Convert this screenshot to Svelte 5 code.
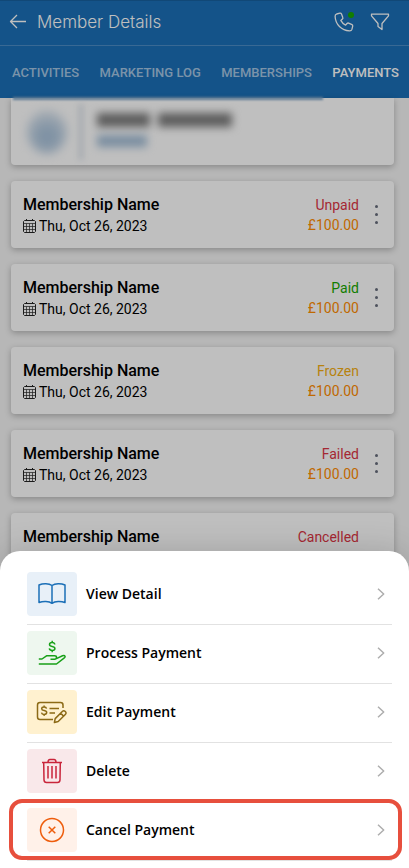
<script>
  const tabs = ['ACTIVITIES', 'MARKETING LOG', 'MEMBERSHIPS', 'PAYMENTS'];

  const payments = [
    { status: 'Unpaid', tone: 'danger', menu: true },
    { status: 'Paid', tone: 'success', menu: true },
    { status: 'Frozen', tone: 'warning', menu: false },
    { status: 'Failed', tone: 'danger', menu: true },
    { status: 'Cancelled', tone: 'danger', menu: false }
  ];

  const actions = [
    { icon: 'book', label: 'View Detail', tone: 'blue' },
    { icon: 'hand', label: 'Process Payment', tone: 'green' },
    { icon: 'edit', label: 'Edit Payment', tone: 'yellow' },
    { icon: 'trash', label: 'Delete', tone: 'red' },
    { icon: 'cancel', label: 'Cancel Payment', tone: 'orange', highlighted: true }
  ];
</script>

<div class="app">
  <header>
    <div class="bar">
      <button class="icon-button" aria-label="Back">
        <svg width="18" height="16" viewBox="0 0 18 16" class="line"><path d="M17 7.500H1.5M8 1L1.5 7.500L8 14" /></svg>
      </button>
      <h1>Member Details</h1>
      <button class="icon-button call" aria-label="Call">
        <svg width="20" height="20" viewBox="0 0 20 20" class="line">
          <path d="M5.9 1.2L2.6 2Q1 2.500 1.100 4.500C1.500 12.500 7.500 18.400 15.500 18.900Q17.400 19 17.900 17.400L18.700 14.100Q18.900 13.100 18 12.600L14.600 11.100Q13.700 10.800 13 11.500L11.600 13.200Q8.500 11.600 6.800 8.400L8.400 7Q9.200 6.300 8.800 5.400L7.500 2Q7 1 5.900 1.200Z" />
        </svg>
        <span class="dot"></span>
      </button>
      <button class="icon-button" aria-label="Filter">
        <svg width="20" height="18" viewBox="0 0 20 18" class="line">
          <path d="M1.500 1.200H18.500V2.800L12 10.500V16.500L8 13.500V10.500L1.500 2.800Z" />
        </svg>
      </button>
    </div>
    <nav>
      {#each tabs as tab}
        <a href="#{tab.toLowerCase().replace(' ', '-')}" class:active={tab === 'PAYMENTS'}>{tab}</a>
      {/each}
    </nav>
  </header>

  <main>
    <section class="card profile" aria-label="Member">
      <div class="avatar"></div>
      <div class="rule"></div>
      <div class="identity">
        <div class="name"><i></i><i></i></div>
        <div class="tag"></div>
      </div>
    </section>

    {#each payments as payment}
      <article class="card">
        <div class="info">
          <h2>Membership Name</h2>
          <p>
            <svg width="13" height="14" viewBox="0 0 13 14" class="calendar">
              <path d="M1.500 1.500H11.500L12.500 2.500V12.500L11.500 13.500H1.500L.5 12.500V2.500ZM3.500 0V2M9.500 0V2" />
              <path class="grid" d="M.5 4.500H12.500M.5 7.500H12.500M.5 10.500H12.500M3.500 4.500V13M6.500 4.500V13M9.500 4.500V13" />
            </svg>
            Thu, Oct 26, 2023
          </p>
        </div>
        <div class="sum">
          <span class={payment.tone}>{payment.status}</span>
          <span class="amount">£100.00</span>
        </div>
        {#if payment.menu}
          <button class="more" aria-label="More options"><i></i><i></i><i></i></button>
        {:else}
          <span class="more"></span>
        {/if}
      </article>
    {/each}
  </main>

  <div class="backdrop"></div>

  <div class="sheet" role="dialog" aria-label="Payment actions">
    {#each actions as action}
      <button class="action" class:highlighted={action.highlighted}>
        <span class="tile {action.tone}">
          {#if action.icon === 'book'}
            <svg width="28" height="24" viewBox="0 0 28 24">
              <path d="M14 3.500C11 1.300 5 1.200 1 3V20.500C5 19 11 19 14 21.300C17 19 23 19 27 20.500V3C23 1.200 17 1.300 14 3.500ZM14 3.500V21.300" />
            </svg>
          {:else if action.icon === 'hand'}
            <svg width="28" height="26" viewBox="0 0 28 26">
              <path d="M16.800 4.500C16.600 3.200 15.600 2.600 14.200 2.600C12.600 2.600 11.500 3.300 11.500 4.500C11.500 7.300 16.900 5.500 16.900 8.400C16.900 9.700 15.700 10.400 14.200 10.400C12.600 10.400 11.500 9.700 11.300 8.400M14.200 .8V2.600M14.200 10.400V12.200" />
              <path d="M.8 19H4L8.500 15.800H16.500Q18.500 15.800 18.500 17.200Q18.500 19.200 16.500 19.200H12.500M18.400 18.600L24.500 15.800Q26.500 15.100 27 16.300Q27.300 17.200 26 18.200L18.500 24H.8" />
            </svg>
          {:else if action.icon === 'edit'}
            <svg width="32" height="24" viewBox="0 0 32 24">
              <path d="M17 19.500H4Q1.500 19.500 1.500 17V5Q1.500 2.500 4 2.500H24.500Q27 2.500 27 5V8" />
              <path d="M10.500 8.700C10.300 7.500 9.500 7 8.100 7C6.700 7 5.700 7.600 5.700 8.700C5.700 11.400 10.700 9.800 10.700 12.600C10.700 13.800 9.600 14.400 8.100 14.400C6.700 14.400 5.700 13.800 5.500 12.600M8.100 5.400V7M8.100 14.400V16M13.500 8.500H23M13.500 13H19" />
              <path d="M26.300 11.500Q27.800 10 29.300 11.500Q30.800 13 29.300 14.500L22.200 21.500L18.400 22.500L19.200 18.600ZM24.700 13.200L27.600 16.100" />
            </svg>
          {:else if action.icon === 'trash'}
            <svg width="22" height="26" viewBox="0 0 22 26">
              <path d="M1 4.500H21M7 4.300Q7 1.500 9 1.500H13Q15 1.500 15 4.300M2.700 4.800L3 22Q3.200 24.500 5.500 24.500H16.500Q18.800 24.500 19 22L19.300 4.800M7 8V20.500M11 8V20.500M15 8V20.500" />
            </svg>
          {:else}
            <svg width="26" height="26" viewBox="0 0 26 26">
              <circle cx="13" cy="13" r="11.500" />
              <path d="M9.700 9.700L16.300 16.300M16.300 9.700L9.700 16.300" />
            </svg>
          {/if}
        </span>
        <span class="label">{action.label}</span>
        <svg class="chevron" width="8" height="12" viewBox="0 0 8 12"><path d="M1 .7L6.700 6L1 11.300" /></svg>
      </button>
    {/each}
  </div>
</div>

<style>
  :global(body) {
    margin: 0;
    background: #f4f4f4;
  }
  .app {
    position: relative;
    height: 100vh;
    overflow: hidden;
    background: #f4f4f4;
    font-family: Roboto, 'Liberation Sans', sans-serif;
    color: #000;
  }
  button {
    border: 0;
    padding: 0;
    background: none;
    color: inherit;
    font: inherit;
    cursor: pointer;
  }
  svg {
    display: block;
    fill: none;
    stroke: currentColor;
    stroke-linejoin: round;
  }
  header {
    box-sizing: border-box;
    height: 98px;
    background: #1b6fb7;
    color: #fff;
  }
  .bar {
    display: flex;
    align-items: center;
    box-sizing: border-box;
    height: 46px;
    padding: 0 19px 0 9px;
    border-top: 1px solid #17609f;
    border-bottom: 1px solid #4c8dc6;
  }
  .line {
    stroke-width: 1.3;
  }
  .icon-button {
    position: relative;
    display: flex;
    margin-top: -2px;
  }
  h1 {
    flex: 1;
    margin: -2px 0 0 10px;
    font: 300 17px/24px Inter, sans-serif;
  }
  .call {
    margin-right: 16px;
  }
  .dot {
    position: absolute;
    top: 0;
    right: 0;
    width: 6px;
    height: 6px;
    border-radius: 50%;
    background: #18a800;
  }
  nav {
    display: flex;
    justify-content: space-between;
    padding: 18px 10px 0 12px;
  }
  nav a {
    color: #a4c5e2;
    font-size: 13px;
    font-weight: 500;
    line-height: 18px;
    text-decoration: none;
    white-space: nowrap;
  }
  nav a.active {
    color: #fff;
  }
  main {
    display: flex;
    flex-direction: column;
    gap: 16px;
    padding: 0 15px 0 11px;
  }
  .card {
    display: flex;
    align-items: center;
    box-sizing: border-box;
    height: 67px;
    padding: 0 10px 0 12px;
    border-radius: 4px;
    background: #fff;
    box-shadow: 0 2px 6px rgba(0, 0, 0, 0.26);
  }
  .profile {
    position: relative;
    border-radius: 0 0 4px 4px;
  }
  .profile::before {
    content: '';
    position: absolute;
    top: -1px;
    left: 2px;
    width: 81%;
    height: 3px;
    background: #7fa5c8;
    filter: blur(1px);
  }
  .avatar {
    width: 40px;
    height: 44px;
    margin: 0 12px 0 4px;
    border-radius: 50%;
    background: radial-gradient(circle at 50% 60%, #aac3db 20%, #dde6ef 75%);
    filter: blur(5px);
  }
  .rule {
    width: 4px;
    height: 56px;
    margin-right: 14px;
    background: #d5dde6;
    filter: blur(3px);
  }
  .identity {
    display: flex;
    flex-direction: column;
    gap: 8px;
    margin-top: -4px;
  }
  .name {
    display: flex;
    gap: 8px;
    filter: blur(4px);
  }
  .name i {
    width: 53px;
    height: 14px;
    background: #7c7c7c;
  }
  .name i + i {
    width: 74px;
  }
  .tag {
    width: 50px;
    height: 12px;
    background: #a3bdd6;
    filter: blur(4px);
  }
  .info {
    flex: 1;
  }
  h2 {
    margin: 2px 0 0;
    font-size: 16px;
    font-weight: 500;
    line-height: 20px;
  }
  p {
    display: flex;
    align-items: center;
    gap: 3px;
    margin: 0;
    font-size: 14px;
    line-height: 22px;
  }
  .calendar {
    stroke-width: 1;
    opacity: 0.85;
  }
  .grid {
    opacity: 0.7;
  }
  .sum {
    display: flex;
    flex-direction: column;
    align-items: flex-end;
    font-size: 14px;
    line-height: 20px;
  }
  .danger {
    color: #dc3545;
  }
  .success {
    color: #18a800;
  }
  .warning {
    color: #f5ae14;
  }
  .amount {
    color: #ff8c00;
  }
  .more {
    display: flex;
    flex-direction: column;
    align-items: center;
    gap: 5px;
    width: 15px;
    margin-left: 10px;
  }
  .more i {
    width: 3px;
    height: 3px;
    border-radius: 50%;
    background: #676d7c;
  }
  .backdrop {
    position: absolute;
    inset: 0;
    background: rgba(0, 0, 0, 0.25);
  }
  .sheet {
    position: absolute;
    right: 0;
    bottom: 0;
    left: 0;
    padding: 15px 17px 7px 27px;
    border-radius: 20px 20px 0 0;
    background: #fff;
    box-shadow: 0 0 32px rgba(0, 0, 0, 0.16);
  }
  .action {
    position: relative;
    display: flex;
    align-items: center;
    box-sizing: border-box;
    width: 100%;
    height: 59px;
    padding: 0 7px 2px 0;
    border-bottom: 1px solid #e2e2e2;
  }
  .highlighted::after {
    content: '';
    position: absolute;
    inset: -3px -10px 0 -18px;
    border: 4px solid #e74f3d;
    border-radius: 13px;
  }
  .tile {
    display: flex;
    align-items: center;
    justify-content: center;
    width: 50px;
    height: 44px;
    border-radius: 4px;
  }
  .tile svg {
    stroke-width: 1.5;
  }
  .blue {
    background: #e8f0f8;
    color: #1b6fb7;
  }
  .green {
    background: #eef7ef;
    color: #18a018;
  }
  .yellow {
    background: #fff1cf;
    color: #8c6a16;
  }
  .red {
    background: #f9e8ea;
    color: #c9253b;
  }
  .orange {
    background: #fff1e9;
    color: #ee5d0c;
  }
  .label {
    flex: 1;
    margin-left: 9px;
    font: 600 14px/20px 'Open Sans', 'Noto Sans', sans-serif;
    text-align: left;
  }
  .chevron {
    color: #adadad;
    stroke-width: 1.5;
  }
</style>
